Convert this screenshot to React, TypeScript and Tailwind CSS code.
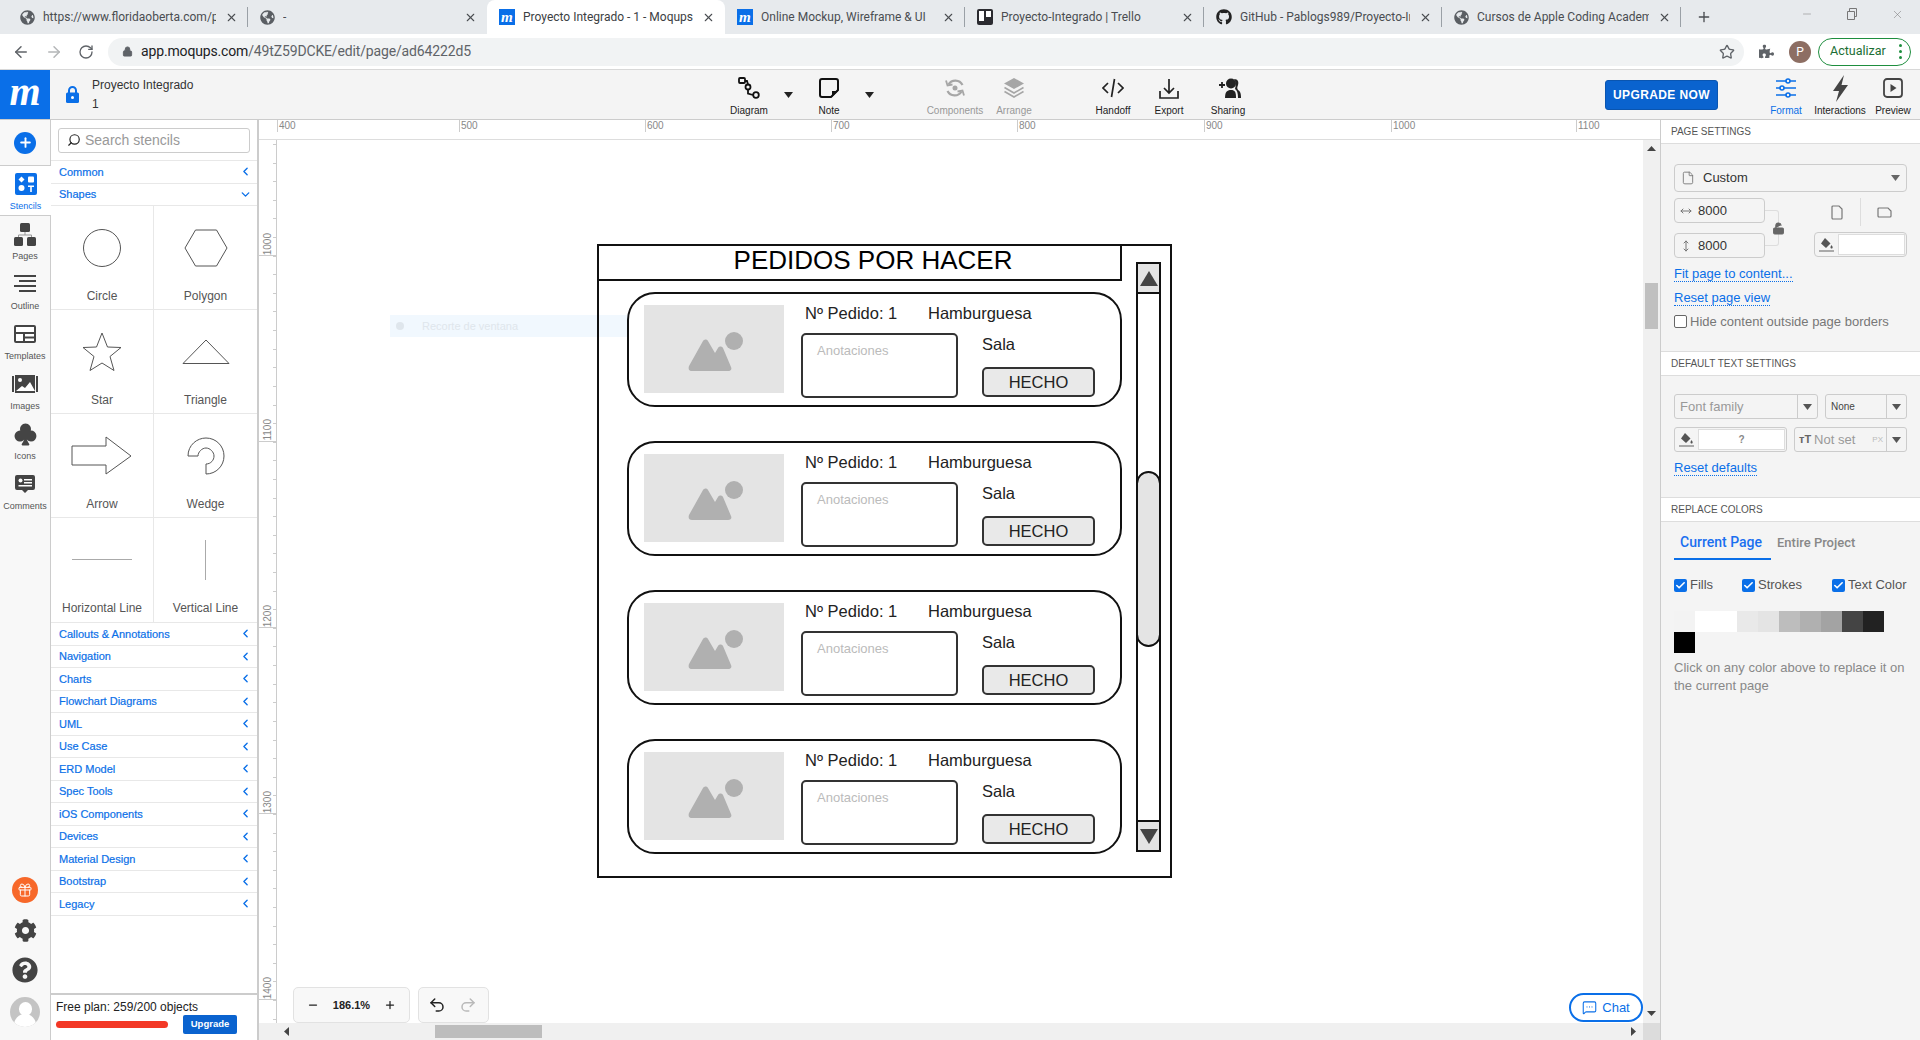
import React from "react";
import { FaGlobeAmericas, FaGithub, FaCog, FaQuestionCircle, FaPuzzlePiece } from "react-icons/fa";
import { BsSuitClubFill } from "react-icons/bs";
import { ArrowLeft, ArrowRight, RotateCw, Lock, Star, Minus, Plus, X, Gift, ChevronLeft, ChevronDown, Search, Undo2, Redo2, MessageSquareMore, File, LockOpen, MoveHorizontal, MoveVertical, Check } from "lucide-react";

const M = ({ s = 16 }: { s?: number }) => (
  <span className="flex items-center justify-center bg-[#0a6fe8] text-white font-['Liberation_Serif',serif] italic font-bold leading-none shrink-0" style={{ width: s, height: s, fontSize: s * 0.95 }}>m</span>
);
const Trello = () => (
  <span className="w-4 h-4 bg-[#2b2b30] rounded-[2px] flex gap-[2px] p-[2px] shrink-0">
    <span className="w-[5px] h-[10px] bg-white" /><span className="w-[5px] h-[6px] bg-white" />
  </span>
);

const tabs = [
  { w: "w-[240px]", icon: <FaGlobeAmericas size={15} color="#5a5e63" />, t: "https://www.floridaoberta.com/p", sep: true },
  { w: "w-[239px]", icon: <FaGlobeAmericas size={15} color="#5a5e63" />, t: "-" },
  { w: "w-[238px]", icon: <M />, t: "Proyecto Integrado - 1 - Moqups", active: true },
  { w: "w-[240px]", icon: <M />, t: "Online Mockup, Wireframe & UI", sep: true },
  { w: "w-[239px]", icon: <Trello />, t: "Proyecto-Integrado | Trello", sep: true },
  { w: "w-[238px]", icon: <FaGithub size={16} color="#222" />, t: "GitHub - Pablogs989/Proyecto-In", sep: true },
  { w: "w-[239px]", icon: <FaGlobeAmericas size={15} color="#5a5e63" />, t: "Cursos de Apple Coding Academ", sep: true },
];

function TabBar() {
  return (
    <div className="h-[34px] bg-[#e7eaed] flex items-center pl-[8px] shrink-0 font-['Roboto',sans-serif] text-[12px] text-[#4a4d51]">
      {tabs.map((t, i) => (
        <div key={i} className={`${t.w} h-[34px] flex items-center pl-[12px] gap-[8px] shrink-0 ${t.active ? "bg-white rounded-t-[8px] text-[#3c4043]" : ""}`}>
          {t.icon}
          <span className="flex-1 overflow-hidden whitespace-nowrap">{t.t}</span>
          <X size={13} color="#4a4d51" strokeWidth={2} className="ml-[1px]" />
          <span className={`ml-[1px] w-[1px] h-[20px] ${t.sep ? "bg-[#9aa0a6]" : ""}`} />
        </div>
      ))}
      <div className="h-[26px] flex items-center pl-[15px]"><Plus size={16} color="#4a4d51" strokeWidth={2} /></div>
      <div className="h-[34px] flex items-start pt-[8px] ml-auto gap-[33px] pr-[16px] text-[#777]">
        <Minus size={12} strokeWidth={1} />
        <svg width="12" height="12" viewBox="0 0 12 12" fill="none" stroke="#777"><path d="M1.500 3.500h7v8h-7zM3.500 3.500V.5h7v8h-2" /></svg>
        <X size={13} strokeWidth={1} />
      </div>
    </div>
  );
}

function AddressBar() {
  return (
    <div className="h-[36px] bg-white border-b border-[#d8d8d8] flex items-center shrink-0 font-['Roboto',sans-serif]">
      <div className="w-[108px] flex items-center pl-[12px] gap-[15px] shrink-0">
        <ArrowLeft size={18} color="#5f6368" />
        <ArrowRight size={18} color="#b4b6b8" />
        <RotateCw size={16} color="#5f6368" />
      </div>
      <div className="w-[1636px] h-[28px] bg-[#f1f3f4] rounded-full flex items-center pl-[14px] pr-[9px] shrink-0">
        <Lock size={11} color="#5f6368" fill="#5f6368" />
        <span className="ml-[8px] text-[14px] text-[#202124] tracking-[-0.15px]">app.moqups.com<span className="text-[#5f6368]">/49tZ59DCKE/edit/page/ad64222d5</span></span>
        <Star size={16} color="#5f6368" className="ml-auto" />
      </div>
      <FaPuzzlePiece size={15} color="#5f6368" className="ml-[15px]" />
      <span className="ml-[15px] w-[22px] h-[22px] rounded-full bg-[#8d6e63] text-white text-[12px] flex items-center justify-center">P</span>
      <div className="ml-[7px] w-[93px] h-[28px] rounded-full border border-[#1e8e3e] flex items-center pl-[11px] pr-[8px] text-[12.5px] text-[#1b6e34]">
        Actualizar
        <span className="ml-auto flex flex-col gap-[3px]"><i className="w-[3px] h-[3px] rounded-full bg-[#1e8e3e]" /><i className="w-[3px] h-[3px] rounded-full bg-[#1e8e3e]" /><i className="w-[3px] h-[3px] rounded-full bg-[#1e8e3e]" /></span>
      </div>
    </div>
  );
}

const Caret = ({ c = "#222" }: { c?: string }) => (
  <svg width="9" height="6" viewBox="0 0 9 6"><path d="M0 0h9L4.500 6z" fill={c} /></svg>
);

function Tool({ w, label, icon, muted, blue, ml }: { w: string; label: string; icon: React.ReactNode; muted?: boolean; blue?: boolean; ml?: string }) {
  return (
    <div className={`${w} ${ml ?? ""} shrink-0 flex flex-col items-center pt-[1px] text-[10px] leading-[12px] ${blue ? "text-[#0a6fe8]" : muted ? "text-[#999]" : "text-[#222]"}`}>
      <div className="h-[30px] flex items-center justify-center">{icon}</div>
      <span className="mt-[2px] whitespace-nowrap">{label}</span>
    </div>
  );
}

function AppBar() {
  return (
    <div className="h-[50px] bg-[#f4f4f4] border-b border-[#ccc] flex items-center shrink-0 font-['Liberation_Sans',sans-serif]">
      <div className="w-[50px] h-[49px] bg-[#0a6fe8] text-white flex items-center justify-center font-['Liberation_Serif',serif] italic font-bold text-[40px] leading-none pb-[6px] shrink-0">m</div>
      <svg width="13" height="17" viewBox="0 0 13 17" className="ml-[16px] shrink-0"><path d="M3 7V4.500a3.500 3.500 0 0 1 7 0V7" fill="none" stroke="#0a6fe8" strokeWidth="2" /><rect x="0" y="6.500" width="13" height="10.500" rx="1.500" fill="#0a6fe8" /><circle cx="6.500" cy="11.500" r="1.500" fill="#fff" /></svg>
      <div className="ml-[13px] w-[120px] text-[12px] leading-[17px] text-[#333] pt-[1px] shrink-0">
        <div>Proyecto Integrado</div>
        <div className="mt-[2px]">1</div>
      </div>
      <Tool ml="ml-[517px]" w="w-[40px]" label="Diagram" icon={
        <svg width="22" height="22" viewBox="0 0 22 22" fill="none" stroke="#111" strokeWidth="1.800"><rect x="1" y="1" width="6" height="5" rx="1" /><circle cx="10" cy="10" r="2.500" /><circle cx="18" cy="18" r="2.800" /><path d="M7 4h2l1 3.500M10 12.500v4l5 1.500" /></svg>
      } />
      <span className="ml-[15px] w-[9px] flex shrink-0"><Caret /></span>
      <Tool ml="ml-[16px]" w="w-[40px]" label="Note" icon={
        <svg width="20" height="20" viewBox="0 0 20 20" fill="none" stroke="#111" strokeWidth="2"><path d="M3 1h14a2 2 0 0 1 2 2v9l-7 7H3a2 2 0 0 1-2-2V3a2 2 0 0 1 2-2z" /><path d="M19 13h-6v6z" fill="#111" stroke="none" /></svg>
      } />
      <span className="ml-[16px] w-[9px] flex shrink-0"><Caret /></span>
      <Tool muted ml="ml-[46px]" w="w-[70px]" label="Components" icon={
        <svg width="20" height="20" viewBox="0 0 20 20" fill="none" stroke="#a6a6a6" strokeWidth="2.200"><path d="M3.500 6.500A8 8 0 0 1 17.500 7M16.500 13.500A8 8 0 0 1 2.500 13" /><circle cx="10" cy="10" r="2.500" fill="#a6a6a6" stroke="none" /><path d="M1 2.500l1.500 5 5-1M19 17.500l-1.500-5-5 1" strokeWidth="1.800" /></svg>
      } />
      <Tool muted ml="ml-[-1px]" w="w-[50px]" label="Arrange" icon={
        <svg width="20" height="20" viewBox="0 0 20 20" fill="none" stroke="#a6a6a6" strokeWidth="1.600"><path d="M10 0l10 5.500L10 11 0 5.500z" fill="#a6a6a6" stroke="none" /><path d="M0.500 9.500L10 15l9.500-5.500M0.500 13.500L10 19l9.500-5.500" /></svg>
      } />
      <Tool ml="ml-[51px]" w="w-[46px]" label="Handoff" icon={
        <svg width="22" height="20" viewBox="0 0 22 20" fill="none" stroke="#222" strokeWidth="1.700"><path d="M6 5L1 10l5 5M16 5l5 5-5 5M12.500 1L9.500 19" /></svg>
      } />
      <Tool ml="ml-[10px]" w="w-[46px]" label="Export" icon={
        <svg width="20" height="21" viewBox="0 0 20 21" fill="none" stroke="#222" strokeWidth="1.700"><path d="M10 1v13M5 10l5 5 5-5M1 13v7h18v-7" /></svg>
      } />
      <Tool ml="ml-[13px]" w="w-[46px]" label="Sharing" icon={
        <svg width="25" height="20" viewBox="0 0 25 20"><path d="M3 7h6M6 4v6" stroke="#222" strokeWidth="1.800" /><circle cx="15" cy="5.500" r="5" fill="#222" /><path d="M9 20c0-6 2-8 6-8s5 2 5 8z" fill="#222" /><path d="M18 1c4 0 5 3 4 6s-1 3 0 5c2 1 3 3 3 8h-3c0-5-1-8-3-9 1-3 1-7-1-10z" fill="#222" /></svg>
      } />
      <button className="ml-[354px] w-[113px] h-[30px] rounded-[3px] bg-[#0a63cf] border border-[#0a55b0] text-white font-bold text-[12px] tracking-[0.4px] shrink-0">UPGRADE NOW</button>
      <Tool blue ml="ml-[50px]" w="w-[36px]" label="Format" icon={
        <svg width="20" height="20" viewBox="0 0 20 20" fill="#f4f4f4" stroke="#0a6fe8" strokeWidth="1.600"><path d="M0 3h20M0 10h20M0 17h20" /><circle cx="12" cy="3" r="2" /><circle cx="6" cy="10" r="2" /><circle cx="12" cy="17" r="2" /></svg>
      } />
      <Tool ml="ml-[10px]" w="w-[52px]" label="Interactions" icon={
        <svg width="17" height="27" viewBox="0 0 17 27"><path d="M12 0L1 16h6L4 27 16 10h-6.500z" fill="#444" /></svg>
      } />
      <Tool ml="ml-[5px]" w="w-[44px]" label="Preview" icon={
        <svg width="20" height="20" viewBox="0 0 20 20" fill="none"><rect x="1" y="1" width="18" height="18" rx="3" stroke="#444" strokeWidth="1.800" /><path d="M7.500 6l6 4-6 4z" fill="#444" /></svg>
      } />
    </div>
  );
}

function RailItem({ icon, label, active }: { icon: React.ReactNode; label: string; active?: boolean }) {
  return (
    <div className={`flex flex-col items-center h-[50px] shrink-0 ${active ? "bg-white border-b border-[#ccc] text-[#0a6fe8] -mr-[1px] relative" : "text-[#555]"}`}>
      <div className="h-[34px] flex items-center justify-center pt-[2px]">{icon}</div>
      <span className="text-[9px] leading-[12px] whitespace-nowrap">{label}</span>
    </div>
  );
}

function Rail() {
  return (
    <div className="w-[51px] bg-[#f8f8f8] border-r border-[#ccc] flex flex-col shrink-0 font-['Liberation_Sans',sans-serif]">
      <div className="h-[46px] border-b border-[#ccc] flex items-center justify-center shrink-0">
        <span className="w-[22px] h-[22px] rounded-full bg-[#0a6fe8] flex items-center justify-center"><Plus size={15} color="#fff" strokeWidth={3} /></span>
      </div>
      <RailItem active label="Stencils" icon={
        <svg width="22" height="22" viewBox="0 0 22 22"><rect width="22" height="22" rx="2" fill="#0a6fe8" /><path d="M6.500 3.500l3 3-3 3-3-3z" fill="#fff" /><rect x="13" y="3.500" width="6" height="6" rx="1" fill="#fff" /><circle cx="6.500" cy="15" r="3" fill="#fff" /><path d="M13 12.500h6v1.500h-2.200v5h-1.600v-5H13z" fill="#fff" /></svg>
      } />
      <RailItem label="Pages" icon={
        <svg width="24" height="23" viewBox="0 0 24 23" fill="#444"><rect x="7" y="0" width="10" height="9" rx="1.500" /><rect x="1" y="14" width="9" height="9" rx="1.500" /><rect x="14" y="14" width="9" height="9" rx="1.500" /><path d="M12 9v3M5.500 14v-2h13v2" stroke="#999" fill="none" /></svg>
      } />
      <RailItem label="Outline" icon={
        <svg width="22" height="18" viewBox="0 0 22 18" fill="#444"><rect x="0" y="0" width="22" height="2" /><rect x="5" y="5" width="17" height="2" /><rect x="0" y="10" width="22" height="2" /><rect x="5" y="15" width="17" height="2" /></svg>
      } />
      <RailItem label="Templates" icon={
        <svg width="22" height="18" viewBox="0 0 22 18"><rect width="22" height="18" rx="2" fill="#444" /><rect x="2" y="2" width="18" height="5" fill="#fff" /><rect x="2" y="9" width="7" height="7" fill="#fff" /><rect x="11" y="9" width="9" height="2.500" fill="#fff" /><rect x="11" y="13.500" width="9" height="2.500" fill="#fff" /></svg>
      } />
      <RailItem label="Images" icon={
        <svg width="26" height="18" viewBox="0 0 26 18"><rect x="0" y="1" width="2" height="16" fill="#444" /><rect x="24" y="1" width="2" height="16" fill="#444" /><rect x="3" y="0" width="20" height="18" fill="#444" /><circle cx="8" cy="5" r="2" fill="#fff" /><path d="M4 16l6-5 3 2 5-6 5 9z" fill="#fff" /></svg>
      } />
      <RailItem label="Icons" icon={<BsSuitClubFill size={25} color="#444" />} />
      <RailItem label="Comments" icon={
        <svg width="20" height="19" viewBox="0 0 20 19"><path d="M2 0h16a2 2 0 0 1 2 2v11a2 2 0 0 1-2 2h-5l-3 3-3-3H2a2 2 0 0 1-2-2V2a2 2 0 0 1 2-2z" fill="#444" /><circle cx="5.500" cy="5.500" r="2" fill="#fff" /><rect x="9" y="4" width="8" height="1.500" fill="#fff" /><rect x="9" y="7" width="8" height="1.500" fill="#fff" /><rect x="3.500" y="10" width="13.500" height="1.500" fill="#fff" /></svg>
      } />
      <div className="mt-auto flex flex-col items-center pb-[13px]">
        <span className="w-[26px] h-[26px] rounded-full bg-[#f7682a] flex items-center justify-center mb-[16px]"><Gift size={16} color="#fff" strokeWidth={1.500} /></span>
        <FaCog size={23} color="#444" className="mb-[15px]" />
        <FaQuestionCircle size={26} color="#444" className="mb-[14px]" />
        <span className="w-[30px] h-[30px] rounded-full bg-[#c4c4c4] overflow-hidden flex flex-col items-center">
          <i className="w-[13px] h-[15px] mt-[5px] rounded-full bg-white" />
          <i className="w-[22px] h-[14px] -mt-[2px] rounded-t-full bg-white" />
        </span>
      </div>
    </div>
  );
}

const Cat = ({ t, open }: { t: string; open?: boolean }) => (
  <div className="h-[22.500px] border-b border-[#e8e8e8] flex items-center pl-[8px] pr-[5px] text-[#0a6fe8] text-[11px] [-webkit-text-stroke:0.2px_#0a6fe8]">
    <span className="flex-1">{t}</span>
    {open ? <ChevronDown size={13} strokeWidth={2.500} /> : <ChevronLeft size={13} strokeWidth={2.500} />}
  </div>
);

const sh = { fill: "none", stroke: "#555", strokeWidth: 1 };
const stencils: { t: string; i: React.ReactNode }[] = [
  { t: "Circle", i: <svg width="40" height="40" viewBox="0 0 40 40"><circle cx="20" cy="20" r="18.500" {...sh} /></svg> },
  { t: "Polygon", i: <svg width="44" height="38" viewBox="0 0 44 38"><path d="M1 19L11.500 1h21L43 19 32.500 37h-21z" {...sh} /></svg> },
  { t: "Star", i: <svg width="40" height="40" viewBox="0 0 40 40"><path d="M20 1l5.500 14L39 15.500 28 24.500 32 38.500 20 31 8 38.500 12 24.500 1 15.500l13.500-.5z" {...sh} /></svg> },
  { t: "Triangle", i: <svg width="48" height="26" viewBox="0 0 48 26"><path d="M24 1l23 23.500H1z" {...sh} /></svg> },
  { t: "Arrow", i: <svg width="62" height="40" viewBox="0 0 62 40"><path d="M1 10h34V1l25 19-25 18v-9H1z" {...sh} /></svg> },
  { t: "Wedge", i: <svg width="40" height="40" viewBox="0 0 40 40"><path d="M2 20C2 9 11 2 20 2c10 0 18 8 18 18 0 10-8 18-18 18V28c5 0 8-4 8-8s-4-8-8-8c-4 0-8 4-8 8z" {...sh} /></svg> },
  { t: "Horizontal Line", i: <span className="block w-[60px] h-[1.500px] bg-[#aaa]" /> },
  { t: "Vertical Line", i: <span className="block w-[1.500px] h-[40px] bg-[#aaa]" /> },
];
const cats = ["Callouts & Annotations", "Navigation", "Charts", "Flowchart Diagrams", "UML", "Use Case", "ERD Model", "Spec Tools", "iOS Components", "Devices", "Material Design", "Bootstrap", "Legacy"];

function Stencils() {
  return (
    <div className="w-[208px] bg-white border-r-2 border-[#ccc] flex flex-col shrink-0 font-['Liberation_Sans',sans-serif]">
      <div className="h-[41px] border-b border-[#e8e8e8] px-[7px] flex items-center shrink-0">
        <div className="w-[193px] h-[25px] rounded-[3px] border border-[#ccc] flex items-center pl-[8px] text-[14px] text-[#999]">
          <Search size={14} color="#222" className="-scale-x-100 mr-[4px]" />Search stencils
        </div>
      </div>
      <Cat t="Common" />
      <Cat t="Shapes" open />
      <div className="grid grid-cols-2 border-b border-[#e8e8e8]">
        {stencils.map((s, i) => (
          <div key={s.t} className={`h-[104px] flex flex-col items-center ${i % 2 === 0 ? "border-r border-[#e8e8e8]" : ""} ${i < 6 ? "border-b border-[#e8e8e8]" : ""}`}>
            <div className="h-[83px] flex items-center justify-center shrink-0">{s.i}</div>
            <span className="text-[12px] text-[#555] leading-[14px]">{s.t}</span>
          </div>
        ))}
      </div>
      {cats.map((c) => <Cat key={c} t={c} />)}
      <div className="mt-auto h-[47px] border-t-2 border-[#ccc] px-[5px] pt-[5px]">
        <div className="text-[12px] leading-[14px] text-[#222]">Free plan: 259/200 objects</div>
        <div className="flex items-start">
          <span className="mt-[7px] w-[112px] h-[7px] rounded-full bg-[#f33826]" />
          <span className="ml-[15px] w-[54px] h-[19px] mt-[1px] rounded-[2px] bg-[#0a63cf] text-white text-[9.500px] font-bold flex items-center justify-center">Upgrade</span>
        </div>
      </div>
    </div>
  );
}

const hTicks = [
  { l: "400", w: "w-[182px]" }, { l: "500", w: "w-[186px]" }, { l: "600", w: "w-[186px]" }, { l: "700", w: "w-[186px]" },
  { l: "800", w: "w-[187px]" }, { l: "900", w: "w-[187px]" }, { l: "1000", w: "w-[185px]" }, { l: "1100", w: "w-[72px]" },
];
const vTicks = ["1000", "1100", "1200", "1300", "1400"];

function HRuler() {
  return (
    <div className="h-[20px] bg-white border-b border-[#ddd] flex pl-[18px] shrink-0 text-[10px] text-[#888] overflow-hidden font-['Liberation_Sans',sans-serif]">
      {hTicks.map((t) => (
        <div key={t.l} className={`${t.w} h-[12px] border-l border-[#ccc] pl-[1px] leading-[12px] shrink-0`}>{t.l}</div>
      ))}
    </div>
  );
}

function VRuler() {
  return (
    <div className="w-[18px] border-r border-[#ccc] shrink-0 flex flex-col text-[10px] text-[#888] overflow-hidden font-['Liberation_Sans',sans-serif] bg-white bg-[repeating-linear-gradient(to_bottom,#ccc_0,#ccc_1px,transparent_1px,transparent_18.610px)] bg-[length:3px_100%] bg-no-repeat bg-[position:right_4px]">
      <div className="h-[116px] shrink-0 border-b border-[#ccc] flex justify-center items-end"><span className="[writing-mode:vertical-rl] rotate-180 leading-[14px]">1000</span></div>
      {vTicks.slice(1).map((t) => (
        <div key={t} className="h-[186px] shrink-0 border-b border-[#ccc] flex justify-center items-end"><span className="[writing-mode:vertical-rl] rotate-180 leading-[14px]">{t}</span></div>
      ))}
    </div>
  );
}

function Card() {
  return (
    <div className="w-[495px] h-[115px] shrink-0 rounded-[28px] border-2 border-[#111] bg-white flex pl-[15px] pt-[10px] text-[16.500px] text-[#222] leading-[20px]">
      <div className="w-[140px] h-[88px] mt-[1px] bg-[#e4e4e4] flex items-center justify-center shrink-0">
        <svg width="56" height="42" viewBox="0 0 56 42" fill="#b0b0b0" className="mt-[3px] ml-[3px]"><circle cx="46" cy="11" r="9" /><path d="M1 36L15 11c1.500-2 4-2 5 0l7 12 3-5c1-2 4-2 5 0l8 19c1 2 0 4-3 4H4c-3 0-4-2-3-5z" /></svg>
      </div>
      <div className="ml-[17px] flex flex-col">
        <div className="flex pl-[4px] h-[30px] -mt-[1px] items-start whitespace-nowrap">
          <span className="w-[123px]">Nº Pedido: 1</span>
          <span>Hamburguesa</span>
        </div>
        <div className="flex">
          <div className="w-[157px] h-[65px] rounded-[5px] border-2 border-[#333] pl-[14px] pt-[8px] text-[13px] leading-[16px] text-[#bbb]">Anotaciones</div>
          <div className="ml-[24px] flex flex-col">
            <span className="h-[34px] pt-[1px]">Sala</span>
            <div className="w-[113px] h-[30px] rounded-[5px] border-2 border-[#333] bg-[#e9e9e9] flex items-center justify-center pb-[1px]">HECHO</div>
          </div>
        </div>
      </div>
    </div>
  );
}

function Wire() {
  return (
    <div className="absolute left-[320px] top-[104px] w-[575px] h-[634px] border-2 border-[#111] flex font-['Liberation_Sans',sans-serif]">
      <div className="w-[523px] shrink-0 flex flex-col">
        <div className="h-[35px] border-r-2 border-b-2 border-[#111] text-[26px] leading-[28px] text-black text-center pl-[27px] bg-white">PEDIDOS POR HACER</div>
        <div className="pl-[28px] pt-[11px] flex flex-col gap-[34px]">
          <Card /><Card /><Card /><Card />
        </div>
      </div>
      <div className="ml-[14px] mt-[16px] w-[25px] h-[590px] border-2 border-[#111] flex flex-col shrink-0 bg-white">
        <div className="h-[30px] bg-[#e4e4e4] border-b-2 border-[#111] flex items-center justify-center shrink-0"><svg width="18" height="15" viewBox="0 0 18 15"><path d="M9 0l9 15H0z" fill="#444" /></svg></div>
        <div className="h-[177px] shrink-0" />
        <div className="h-[176px] rounded-full bg-[#e4e4e4] border-y-2 -mx-[2px] border-x-2 border-[#111] shrink-0" />
        <div className="flex-1" />
        <div className="h-[30px] bg-[#e4e4e4] border-t-2 border-[#111] flex items-center justify-center shrink-0"><svg width="18" height="15" viewBox="0 0 18 15"><path d="M9 15L0 0h18z" fill="#444" /></svg></div>
      </div>
    </div>
  );
}

function Center() {
  return (
    <div className="flex-1 min-w-0 flex flex-col">
      <HRuler />
      <div className="flex-1 min-h-0 flex">
        <VRuler />
        <div className="flex-1 relative bg-white overflow-hidden font-['Liberation_Sans',sans-serif]">
          <div className="absolute left-[113px] top-[175px] w-[240px] h-[22px] bg-[#f1f8fe] flex items-center pl-[6px] gap-[18px] text-[11px] text-[#dfe6ec]">
            <span className="w-[8px] h-[8px] rounded-full bg-[#dfe6ec]" />Recorte de ventana
          </div>
          <Wire />
          <div className="absolute left-[16px] bottom-0 flex gap-[8px] text-[#222]">
            <div className="w-[117px] h-[36px] rounded-[5px] border border-[#e2e2e2] bg-[#f8f8f8] flex items-center px-[13px] text-[11px] font-bold justify-between">
              <Minus size={12} strokeWidth={2.500} /><span>186.1%</span><Plus size={12} strokeWidth={2.500} />
            </div>
            <div className="w-[71px] h-[36px] rounded-[5px] border border-[#e2e2e2] bg-[#f8f8f8] flex items-center pl-[9px] pr-[11px] justify-between">
              <Undo2 size={18} strokeWidth={2} /><Redo2 size={18} color="#b9b9b9" strokeWidth={2} />
            </div>
          </div>
          <div className="absolute right-0 bottom-[1px] w-[74px] h-[29px] rounded-full border-2 border-[#0a6fe8] bg-white text-[#0a6fe8] text-[13px] flex items-center justify-center gap-[5px]">
            <MessageSquareMore size={15} strokeWidth={1.700} />Chat
          </div>
        </div>
        <div className="w-[17px] bg-[#f0f0f0] flex flex-col items-center shrink-0">
          <svg width="9" height="5" viewBox="0 0 9 5" className="mt-[6px] shrink-0"><path d="M4.500 0L9 5H0z" fill="#444" /></svg>
          <div className="w-[13px] h-[46px] bg-[#c0c0c0] mt-[132px] shrink-0" />
          <svg width="9" height="5" viewBox="0 0 9 5" className="mt-auto mb-[7px] shrink-0"><path d="M4.500 5L9 0H0z" fill="#444" /></svg>
        </div>
      </div>
      <div className="h-[17px] bg-[#f0f0f0] flex items-center shrink-0">
        <svg width="5" height="9" viewBox="0 0 5 9" className="ml-[25px] shrink-0"><path d="M0 4.500L5 0v9z" fill="#444" /></svg>
        <div className="w-[107px] h-[13px] bg-[#bdbdbd] ml-[146px] shrink-0" />
        <svg width="5" height="9" viewBox="0 0 5 9" className="ml-auto mr-[7px] shrink-0"><path d="M5 4.500L0 0v9z" fill="#444" /></svg>
        <div className="w-[17px] h-[17px] bg-[#dcdcdc] shrink-0" />
      </div>
    </div>
  );
}

const SecHead = ({ t }: { t: string }) => (
  <div className="h-[24px] bg-white border-b border-[#ddd] pl-[10px] flex items-center text-[10px] text-[#555] shrink-0">{t}</div>
);
const Link = ({ t, cls }: { t: string; cls: string }) => (
  <div className={`${cls} text-[13px] leading-[15px] text-[#0a6fe8] w-fit border-b border-dotted border-[#0a6fe8]`}>{t}</div>
);
const Sel = ({ w, t, cls }: { w: string; t: string; cls: string }) => (
  <div className={`${w} h-[25px] border border-[#ccc] rounded-[3px] flex items-center bg-[#f4f4f4] ${cls}`}>
    <span className="flex-1 pl-[5px] truncate">{t}</span>
    <span className="w-[20px] h-full border-l border-[#ccc] flex items-center justify-center"><Caret c="#555" /></span>
  </div>
);
const Swatch = ["bg-[#f3f3f3]", "bg-white", "bg-white", "bg-[#e9e9e9]", "bg-[#e4e4e4]", "bg-[#bdbdbd]", "bg-[#b0b0b0]", "bg-[#a3a3a3]", "bg-[#444444]", "bg-[#222222]", "bg-black"];
const Bucket = () => (
  <svg width="15" height="15" viewBox="0 0 15 15"><path d="M6 1l5.500 5.500L7 11 2 6.500z" fill="#555" /><path d="M12.500 8c1 1.500 1.500 2 1 3s-2 .5-2 -.5.5-1.500 1-2.500z" fill="#555" /><rect x="0" y="13" width="15" height="2" fill="#aaa" /></svg>
);
const Chk = ({ t, w }: { t: string; w: string }) => (
  <div className={`${w} flex items-center gap-[3px] text-[13px] text-[#555]`}>
    <span className="w-[13px] h-[13px] rounded-[2px] bg-[#0a6fe8] flex items-center justify-center"><Check size={11} color="#fff" strokeWidth={3.500} /></span>{t}
  </div>
);

function Right() {
  return (
    <div className="w-[260px] bg-[#f4f4f4] border-l border-[#ccc] flex flex-col shrink-0 font-['Liberation_Sans',sans-serif]">
      <SecHead t="PAGE SETTINGS" />
      <div className="h-[207px] pl-[13px] pt-[20px] shrink-0">
        <div className="w-[233px] h-[28px] border border-[#ccc] rounded-[4px] flex items-center pl-[6px] pr-[6px] text-[13px] text-[#333]">
          <File size={14} color="#777" strokeWidth={1.500} /><span className="ml-[8px] flex-1">Custom</span><Caret c="#666" />
        </div>
        <div className="flex mt-[6px]">
          <div className="w-[91px] flex flex-col gap-[10px]">
            <div className="h-[25px] border border-[#ccc] rounded-[4px] flex items-center pl-[5px] gap-[6px] text-[13px] text-[#333]"><MoveHorizontal size={12} color="#777" />8000</div>
            <div className="h-[25px] border border-[#ccc] rounded-[4px] flex items-center pl-[5px] gap-[6px] text-[13px] text-[#333]"><MoveVertical size={12} color="#777" />8000</div>
          </div>
          <div className="w-[14px] h-[36px] mt-[12px] border-y border-r border-[#ddd] rounded-r-[3px] shrink-0" />
          <LockOpen size={13} color="#666" fill="#666" className="mt-[24px] -ml-[7px] shrink-0" />
          <div className="ml-[29px] w-[93px] flex flex-col">
            <div className="h-[28px] flex items-center">
              <svg width="12" height="15" viewBox="0 0 12 15" fill="none" stroke="#777" strokeWidth="1.200" className="ml-[17px]"><path d="M2 1h6l3 3v9a1 1 0 0 1-1 1H2a1 1 0 0 1-1-1V2a1 1 0 0 1 1-1z" /></svg>
              <span className="ml-[17px] w-[1px] h-[28px] bg-[#ddd]" />
              <svg width="15" height="11" viewBox="0 0 15 11" fill="none" stroke="#777" strokeWidth="1.200" className="ml-[16px]"><path d="M2 1h9l3 3v5a1 1 0 0 1-1 1H2a1 1 0 0 1-1-1V2a1 1 0 0 1 1-1z" /></svg>
            </div>
            <div className="mt-[6px] h-[25px] border border-[#ccc] rounded-[4px] flex items-center pl-[4px]">
              <Bucket />
              <span className="ml-[4px] flex-1 h-[21px] bg-white border border-[#ddd] mr-[1px]" />
            </div>
          </div>
        </div>
        <Link t="Fit page to content..." cls="mt-[8px]" />
        <Link t="Reset page view" cls="mt-[8px]" />
        <div className="flex items-center gap-[3px] mt-[8px] text-[13px] leading-[15px] text-[#777]">
          <span className="w-[13px] h-[13px] border border-[#666] rounded-[2px] bg-white" />Hide content outside page borders
        </div>
      </div>
      <div className="border-t border-[#ddd]"><SecHead t="DEFAULT TEXT SETTINGS" /></div>
      <div className="h-[121px] pl-[13px] pt-[18px] shrink-0 text-[#999]">
        <div className="flex gap-[7px]">
          <Sel w="w-[144px]" t="Font family" cls="text-[13px]" />
          <Sel w="w-[82px]" t="None" cls="text-[10px] text-[#444]" />
        </div>
        <div className="flex gap-[7px] mt-[8px]">
          <div className="w-[113px] h-[25px] border border-[#ccc] rounded-[3px] flex items-center pl-[4px]"><Bucket /><span className="ml-[4px] flex-1 h-[21px] bg-white border border-[#ddd] mr-[1px] text-[10px] text-center leading-[20px] font-bold text-[#888]">?</span></div>
          <div className="w-[113px] h-[25px] border border-[#ccc] rounded-[3px] flex items-center text-[13px]">
            <span className="pl-[4px] text-[11px] font-bold text-[#666] leading-none">тT</span>
            <span className="pl-[3px] flex-1">Not set</span>
            <span className="text-[8px] text-[#bbb] pr-[3px]">PX</span>
            <span className="w-[20px] h-full border-l border-[#ccc] flex items-center justify-center"><Caret c="#555" /></span>
          </div>
        </div>
        <Link t="Reset defaults" cls="mt-[8px]" />
      </div>
      <div className="border-t border-[#ddd]"><SecHead t="REPLACE COLORS" /></div>
      <div className="pl-[13px] shrink-0">
        <div className="flex text-[13px] h-[38px] font-['Roboto',sans-serif] w-fit font-medium">
          <span className="w-[97px] pl-[6px] pt-[10px] text-[14px] text-[#1a6ff0] border-b-2 border-[#0a6fe8]">Current Page</span>
          <span className="pl-[6px] pt-[11px] text-[#888]">Entire Project</span>
        </div>
        <div className="flex mt-[16px] h-[18px]">
          <Chk t="Fills" w="w-[68px]" /><Chk t="Strokes" w="w-[90px]" /><Chk t="Text Color" w="w-[80px]" />
        </div>
        <div className="flex flex-wrap w-[222px] mt-[17px]">
          {Swatch.map((c, i) => <span key={i} className={`w-[21px] h-[21px] ${c}`} />)}
        </div>
        <div className="mt-[6px] w-[240px] text-[13px] leading-[18px] text-[#888]">Click on any color above to replace it on the current page</div>
      </div>
    </div>
  );
}

export default function App() {
  return (
    <div className="w-[1920px] h-[1040px] overflow-hidden flex flex-col bg-white">
      <TabBar />
      <AddressBar />
      <AppBar />
      <div className="flex-1 min-h-0 flex">
        <Rail />
        <Stencils />
        <Center />
        <Right />
      </div>
    </div>
  );
}
